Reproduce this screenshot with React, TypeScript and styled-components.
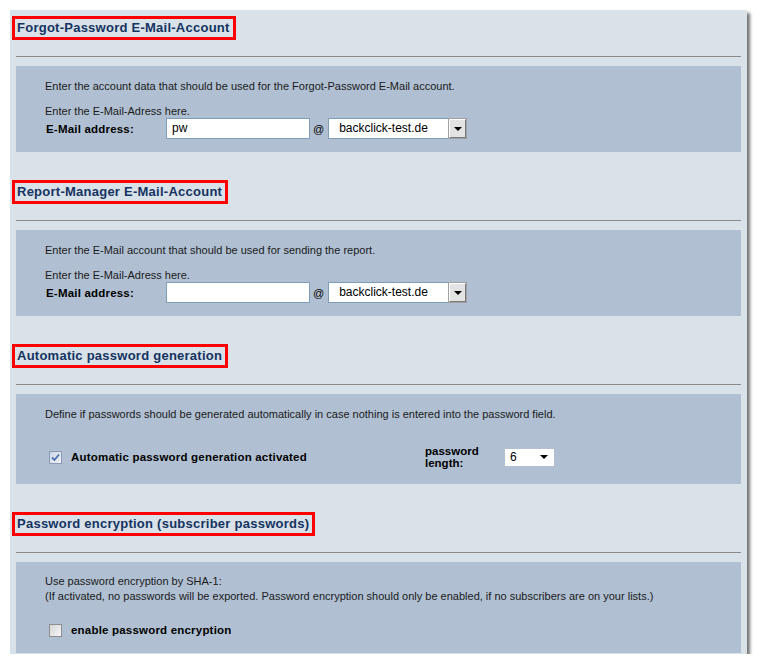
import React from "react";
import styled, { createGlobalStyle } from "styled-components";

const GlobalStyle = createGlobalStyle`
  html, body {
    margin: 0;
    padding: 0;
    background: #ffffff;
  }
  body {
    font-family: "Liberation Sans", Arial, sans-serif;
    font-size: 11px;
    color: #1a1a1a;
  }
`;

const Page = styled.div`
  padding: 10px 0 0 10px;
`;

const Panel = styled.div`
  width: 725px;
  padding: 6px 6px 1px 6px;
  background: #d9e1e9;
  box-shadow: 3px 3px 3px rgba(0, 0, 0, 0.55);
`;

const Section = styled.section`
  & + & {
    margin-top: 28px;
  }
`;

const HeadingRow = styled.div`
  height: 40px;
`;

const Heading = styled.h2`
  display: inline-block;
  margin: 0 0 0 -4px;
  padding: 1px 3px 1px 2px;
  border: 3px solid #ff0000;
  font-size: 13px;
  line-height: 16px;
  letter-spacing: 0.25px;
  font-weight: bold;
  color: #143361;
`;

const Rule = styled.div`
  height: 1px;
  background: #8a8a8a;
  margin-bottom: 9px;
`;

const Box = styled.div<{ $pad: string }>`
  background: #b0c0d2;
  padding: ${(p) => p.$pad};
`;

const Line = styled.div<{ $lh?: number; $mt?: number }>`
  line-height: ${(p) => p.$lh ?? 14}px;
  margin-top: ${(p) => p.$mt ?? 0}px;
  white-space: nowrap;
`;

const FormRow = styled.div`
  display: flex;
  align-items: center;
  height: 21px;
`;

const FieldLabel = styled.label`
  width: 120px;
  padding-left: 1px;
  font-weight: bold;
  font-size: 11.5px;
  letter-spacing: 0.2px;
  color: #000;
`;

const TextInput = styled.div`
  box-sizing: border-box;
  width: 144px;
  height: 21px;
  border: 1px solid #7f9db9;
  background: #fff;
  padding: 0 5px;
  line-height: 19px;
  font-size: 12px;
  color: #000;
`;

const At = styled.span`
  padding: 0 4px 0 3px;
  font-size: 11px;
  color: #000;
`;

const DomainSelect = styled.div`
  box-sizing: border-box;
  width: 139px;
  height: 21px;
  border: 1px solid #7f9db9;
  background: #fff;
  display: flex;
  align-items: stretch;
`;

const SelectValue = styled.span`
  flex: 1;
  padding-left: 10px;
  line-height: 19px;
  font-size: 12px;
  color: #000;
`;

const DropButton = styled.span`
  box-sizing: border-box;
  width: 17px;
  background: #e3e3e3;
  border: 1px solid;
  border-color: #ffffff #7a7a7a #7a7a7a #ffffff;
  outline: 1px solid #a0a0a0;
  display: flex;
  align-items: center;
  justify-content: center;
`;

const Arrow = styled.span<{ $size?: number }>`
  width: 0;
  height: 0;
  border-left: ${(p) => p.$size ?? 4}px solid transparent;
  border-right: ${(p) => p.$size ?? 4}px solid transparent;
  border-top: ${(p) => p.$size ?? 4}px solid #000;
`;

const OptionRow = styled.div<{ $h: number; $mt: number }>`
  display: flex;
  align-items: center;
  height: ${(p) => p.$h}px;
  margin-top: ${(p) => p.$mt}px;
  padding-left: 4px;
`;

const CheckGroup = styled.div<{ $w?: number }>`
  display: flex;
  align-items: center;
  width: ${(p) => (p.$w ? `${p.$w}px` : "auto")};
`;

const Check = styled.span<{ $checked?: boolean }>`
  box-sizing: border-box;
  width: 13px;
  height: 13px;
  border: 1px solid ${(p) => (p.$checked ? "#8a9ab5" : "#8e8e8e")};
  background: ${(p) =>
    p.$checked
      ? "linear-gradient(135deg, #cdd6e4 0%, #eef1f6 100%)"
      : "linear-gradient(135deg, #d6d6d6 0%, #f6f6f6 100%)"};
  margin-right: 9px;
  display: flex;
  align-items: center;
  justify-content: center;
`;

const CheckLabel = styled.span`
  font-weight: bold;
  font-size: 11.5px;
  letter-spacing: 0.2px;
  color: #000;
`;

const StackLabel = styled.span`
  width: 80px;
  font-weight: bold;
  font-size: 11.5px;
  line-height: 12px;
  color: #000;
`;

const SmallSelect = styled.div`
  box-sizing: border-box;
  width: 49px;
  height: 17px;
  background: #fff;
  display: flex;
  align-items: center;
  justify-content: space-between;
  padding: 0 6px 0 5px;
  font-size: 12px;
  color: #000;
`;

function Tick() {
  return (
    <svg width="9" height="9" viewBox="0 0 9 9">
      <path d="M1 4.5 L3.5 7 L8 1.5" fill="none" stroke="#4f6fae" strokeWidth="1.8" />
    </svg>
  );
}

function EmailRow({ user }: { user: string }) {
  return (
    <FormRow>
      <FieldLabel>E-Mail address:</FieldLabel>
      <TextInput>{user}</TextInput>
      <At>@</At>
      <DomainSelect>
        <SelectValue>backclick-test.de</SelectValue>
        <DropButton>
          <Arrow />
        </DropButton>
      </DomainSelect>
    </FormRow>
  );
}

function SectionHead({ title }: { title: string }) {
  return (
    <>
      <HeadingRow>
        <Heading>{title}</Heading>
      </HeadingRow>
      <Rule />
    </>
  );
}

export default function App() {
  return (
    <Page>
      <GlobalStyle />
      <Panel>
        <Section>
          <SectionHead title="Forgot-Password E-Mail-Account" />
          <Box $pad="13px 0 13px 29px">
            <Line>Enter the account data that should be used for the Forgot-Password E-Mail account.</Line>
            <Line $lh={13} $mt={12}>Enter the E-Mail-Adress here.</Line>
            <EmailRow user="pw" />
          </Box>
        </Section>

        <Section>
          <SectionHead title="Report-Manager E-Mail-Account" />
          <Box $pad="13px 0 13px 29px">
            <Line>Enter the E-Mail account that should be used for sending the report.</Line>
            <Line $lh={13} $mt={12}>Enter the E-Mail-Adress here.</Line>
            <EmailRow user="" />
          </Box>
        </Section>

        <Section>
          <SectionHead title="Automatic password generation" />
          <Box $pad="13px 0 16px 29px">
            <Line>Define if passwords should be generated automatically in case nothing is entered into the password field.</Line>
            <OptionRow $h={22} $mt={25}>
              <CheckGroup $w={376}>
                <Check $checked>
                  <Tick />
                </Check>
                <CheckLabel>Automatic password generation activated</CheckLabel>
              </CheckGroup>
              <StackLabel>
                password
                <br />
                length:
              </StackLabel>
              <SmallSelect>
                6
                <Arrow $size={4} />
              </SmallSelect>
            </OptionRow>
          </Box>
        </Section>

        <Section>
          <SectionHead title="Password encryption (subscriber passwords)" />
          <Box $pad="12px 0 17px 29px">
            <Line $lh={15}>Use password encryption by SHA-1:</Line>
            <Line $lh={15}>
              (If activated, no passwords will be exported. Password encryption should only be enabled, if no
              subscribers are on your lists.)
            </Line>
            <OptionRow $h={12} $mt={20}>
              <CheckGroup>
                <Check />
                <CheckLabel>enable password encryption</CheckLabel>
              </CheckGroup>
            </OptionRow>
          </Box>
        </Section>
      </Panel>
    </Page>
  );
}
